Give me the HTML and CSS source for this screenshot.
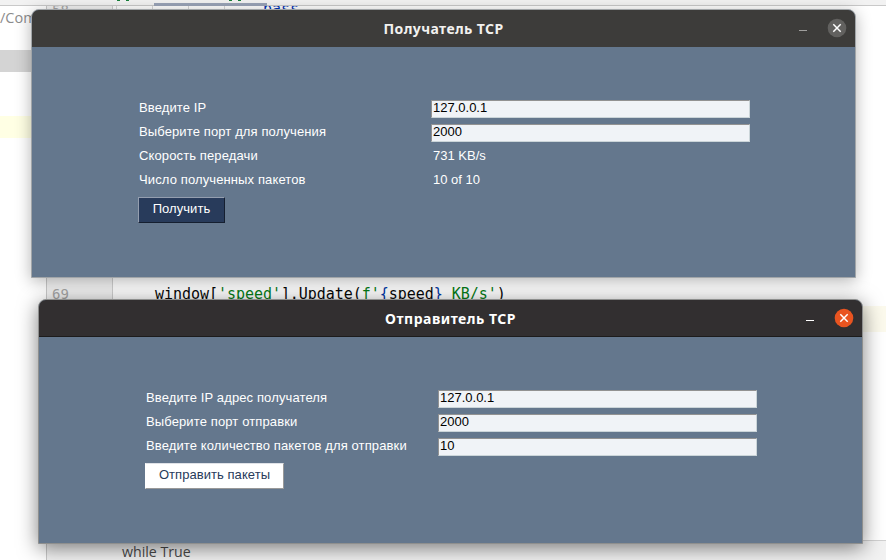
FILE: index.html
```html
<!DOCTYPE html>
<html lang="ru">
<head>
<meta charset="utf-8">
<title>TCP</title>
<link rel="stylesheet" href="styles.css">
</head>
<body>
<div class="desktop">
  <div class="ide">
    <div class="tabbar"><i class="tab-text tab-one"></i><i class="tab-active"></i><i class="tab-text tab-two"></i></div>
    <div class="workspace">
      <div class="project">
        <div class="path">/Com</div>
        <div class="selected"></div>
        <div class="marked"></div>
      </div>
      <div class="editor">
        <div class="code">
          <div class="gutter"><span class="line-top">58</span><span class="line-low">69</span></div>
          <div class="source">
            <div class="src-top"><i></i><i></i><i></i><i></i><span class="kw">pass</span></div>
            <div class="src-low">window[<span class="str">'speed'</span>].Update(<span class="str">f'</span><span class="brace">{</span>speed<span class="brace">}</span><span class="str"> KB/s'</span>)</div>
            <div class="current-line"></div>
          </div>
        </div>
        <div class="breadcrumb">while True</div>
      </div>
    </div>
  </div>

  <section class="window receiver">
    <header class="titlebar">
      <h1>Получатель TCP</h1>
      <svg class="controls" width="56" height="36" viewBox="0 0 56 36"><path class="min" d="M4 20.5h8"/><circle cx="42" cy="18" r="9.3"/><path class="x" d="M38.3 14.3l7.4 7.4M45.7 14.3l-7.4 7.4"/></svg>
    </header>
    <div class="form">
      <span class="label">Введите IP</span><span class="field">127.0.0.1</span>
      <span class="label">Выберите порт для получения</span><span class="field">2000</span>
      <span class="label">Скорость передачи</span><span class="value">731 KB/s</span>
      <span class="label">Число полученных пакетов</span><span class="value">10 of 10</span>
      <button class="btn btn-dark">Получить</button>
    </div>
  </section>

  <section class="window sender">
    <header class="titlebar">
      <h1>Отправитель TCP</h1>
      <svg class="controls" width="56" height="36" viewBox="0 0 56 36"><path class="min" d="M4 20.5h8"/><circle cx="42" cy="18" r="9.3"/><path class="x" d="M38.3 14.3l7.4 7.4M45.7 14.3l-7.4 7.4"/></svg>
    </header>
    <div class="form">
      <span class="label">Введите IP адрес получателя</span><span class="field">127.0.0.1</span>
      <span class="label">Выберите порт отправки</span><span class="field">2000</span>
      <span class="label">Введите количество пакетов для отправки</span><span class="field">10</span>
      <button class="btn btn-light">Отправить пакеты</button>
    </div>
  </section>
</div>
</body>
</html>
```
FILE: styles.css
```css
* { box-sizing: border-box; }
body { margin: 0; }
.desktop { position: relative; width: 886px; height: 560px; overflow: hidden; background: #fff; font-family: "Liberation Sans", sans-serif; }
.ide { height: 100%; display: flex; flex-direction: column; }
.tabbar { height: 6px; flex: none; display: flex; background: #f2f2f2; border-bottom: 1px solid #c9c9c9; }
.tab-active { width: 113px; height: 3px; margin: 3px 0 0 25px; background: #99a3b7; }
.tab-text { width: 12px; height: 1px; border: solid #16803a; border-width: 0 3px; }
.tab-one { margin-left: 117px; }
.tab-two { margin-left: -38px; }
.workspace { flex: 1; display: flex; min-height: 0; }
.project { width: 46px; flex: none; }
.path { height: 44px; padding-top: 2px; font: 14.5px/20px "Open Sans", sans-serif; color: #8c8c8c; }
.selected { height: 22px; background: #d4d4d4; }
.marked { height: 22px; margin-top: 44px; background: #ffffe4; }
.editor { flex: 1; display: flex; flex-direction: column; border-left: 1px solid #c9c9c9; min-width: 0; }
.code { flex: 1; display: flex; min-height: 0; overflow: hidden; font: 15px/22px "DejaVu Sans Mono", monospace; }
.gutter { width: 66px; flex: none; display: flex; flex-direction: column; padding-left: 5px; background: #f2f2f2; border-right: 1px solid #d0d0d0; color: #a6a6a6; font-size: 14px; }
.line-top { margin-top: -7px; height: 22px; }
.line-low { margin-top: 262px; }
.source { flex: 1; display: flex; flex-direction: column; color: #080808; }
.src-top { display: flex; height: 22px; margin-top: -8px; }
.src-top i { width: 4px; border-right: 1px solid #d8d8d8; }
.src-top i + i { width: 36px; }
.kw { margin-left: 38px; color: #0033b3; }
.src-low { margin: 263px 0 0 42px; letter-spacing: -.04px; height: 23px; white-space: pre; }
.str { color: #067d17; }
.brace { color: #0037a6; }
.current-line { height: 26px; background: #fcfaed; }
.breadcrumb { height: 20px; flex: none; padding-left: 75px; background: #f2f2f2; border-top: 1px solid #d1d1d1; font: 14.2px/22px "Open Sans", sans-serif; color: #4a4a4a; }

.window { position: absolute; width: 825px; border: 1px solid #a1a5a8; border-radius: 8px 8px 0 0; background: #64778d; }
.receiver { left: 31px; top: 9px; height: 269px; box-shadow: 0 3px 16px rgba(0,0,0,.3); }
.sender { left: 38px; top: 299px; height: 245px; border-color: #8e8f8e; box-shadow: 0 4px 20px rgba(0,0,0,.5); }
.titlebar { display: flex; align-items: center; height: 37px; border-radius: 7px 7px 0 0; background: #3d3c3a; color: #f2f1ef; }
.sender .titlebar { background: #322f30; border-bottom: 1px solid #1d1c1c; color: #fff; }
h1 { flex: 1; margin: 0; text-align: center; font: bold 14px/36px "Noto Sans", sans-serif; letter-spacing: .4px; }
.sender h1 { padding-top: 2px; line-height: 34px; letter-spacing: .5px; }
.controls { flex: none; margin-left: -56px; transform: translateX(-4px); }
.receiver .controls { margin-bottom: 1px; }
.controls path { fill: none; stroke: #fff; stroke-width: 1.5; }
.controls .min { stroke-width: 1; }
.receiver .min { stroke: #a09f9d; }
.controls circle { fill: #62615f; }
.sender circle { fill: #e95420; }
.form { display: grid; grid-template-columns: 293px 319px; grid-auto-rows: 24px; padding: 53px 0 0 106px; font-size: 13px; line-height: 16px; color: #fff; white-space: pre; }
.label { padding: 0 0 0 1px; letter-spacing: .12px; }
.value { padding-left: 2px; }
.field { height: 18px; padding-left: 1px; line-height: 13px; color: #000; background: #f0f3f7; border: 1px solid; border-color: #929292 #cbd5d9 #cbd5d9 #929292; }
.btn { height: 26px; margin: 1px 0 0; padding: 0 0 3px; font: 13px/19px "Liberation Sans", sans-serif; letter-spacing: .05px; border: 1px solid; border-radius: 0; }
.btn-dark { width: 87px; color: #fff; background: #283b5b; border-color: #949eaf #151f30 #151f30 #949eaf; }
.btn-light { width: 139px; color: #283b5b; background: #fff; border-color: #dfe2e7 #999 #999 #fff; }
```
